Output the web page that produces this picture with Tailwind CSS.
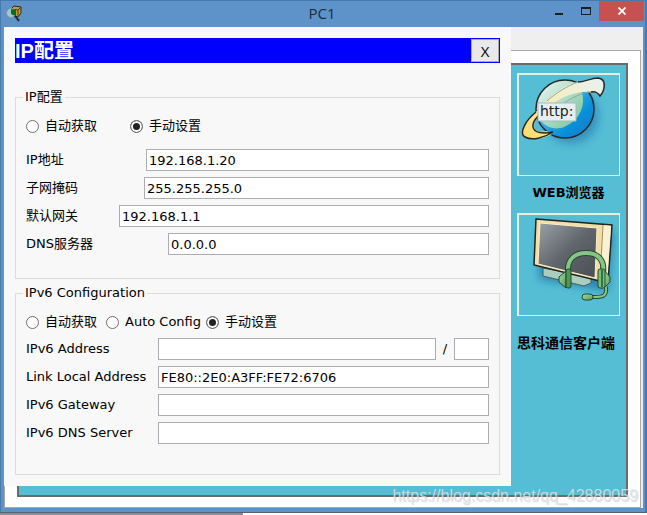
<!DOCTYPE html>
<html lang="zh-CN">
<head>
    <meta charset="UTF-8">
    <title>PC1</title>
    <script src="https://cdn.jsdelivr.net/npm/@tailwindcss/browser@4"></script>
</head>
<body class="relative flex flex-col h-screen bg-white overflow-hidden text-black text-[13px] leading-5 font-['DejaVu_Sans','Noto_Sans_CJK_SC',sans-serif]">
    <!-- window -->
    <div class="flex-1 flex flex-col bg-[#5d93c8] border-t border-l border-r-2 border-[#4779ac] border-b border-b-[#55606a] pl-[3px] pr-[2px] pb-1">
        <header class="flex h-[26px] items-start -mr-px">
            <svg class="mt-1 ml-[2px]" width="18" height="18" viewBox="0 0 18 18">
                <path d="M5 4l3-3 7 1v6l-3 4-6-2z" fill="#c79a3c" stroke="#332a12"/>
                <path d="M5 4l7 1 3-3M12 5v6" fill="none" stroke="#4a3a16"/>
                <circle cx="5" cy="8" r="4.500" fill="#a9c4cf" stroke="#8099a6"/>
                <path d="M5 4l5 1v6l-3-1-2-1z" fill="#08701a"/>
                <path d="M9 11l4 5" stroke="#1c2430" stroke-width="2"/>
            </svg>
            <h1 class="flex-1 text-center pt-[2px] pl-[74px] text-[15px] text-[#1c2b3c] font-['Open_Sans',sans-serif]">PC1</h1>
            <button aria-label="Minimize" class="w-[26px] h-5 flex items-center justify-center">
                <svg width="8" height="10" viewBox="0 0 8 10"><path d="M0 7h8v2H0z" fill="#1d1d1d"/></svg>
            </button>
            <button aria-label="Maximize" class="w-[27px] h-5 flex items-center justify-center">
                <svg width="10" height="8" viewBox="0 0 10 8"><path d="M0 0h10v8H0zM1 2v5h8V2z" fill="#1d1d1d" fill-rule="evenodd"/></svg>
            </button>
            <button aria-label="Close" class="w-[45px] h-5 bg-[#c75050] flex items-center justify-center">
                <svg width="8" height="8" viewBox="0 0 8 8"><path d="M.5.5l7 7M7.500.5l-7 7" stroke="#fff" stroke-width="1.800"/></svg>
            </button>
        </header>

        <main class="relative flex-1 flex flex-col bg-[#efefef] pt-[23px] pr-[2px]">
            <!-- desktop tab -->
            <div class="flex-1 flex bg-white border border-[#a9a9a9] px-3 pt-3 pb-[10px]">
                <div class="flex-1 flex justify-end bg-[#55bed5] border-2 border-[#6b6b6b] pt-2 pr-[6px]">
                    <div class="w-[103px] flex flex-col font-bold">
                        <a href="#" class="flex flex-col items-center">
                            <span class="size-[103px] border border-l-2 border-t-2 border-[#e9eedc]">
                                <svg width="100" height="100" viewBox="0 0 100 100">
                                    <defs>
                                        <linearGradient id="sea" x1="0" y1="0" x2="1" y2="1">
                                            <stop offset="0.3" stop-color="#55b9e4"/>
                                            <stop offset="0.7" stop-color="#0790da"/>
                                            <stop offset="1" stop-color="#2872bd"/>
                                        </linearGradient>
                                        <linearGradient id="land" x1="0" y1="0" x2="1" y2="1">
                                            <stop offset="0" stop-color="#f0f8f8"/>
                                            <stop offset="0.6" stop-color="#a1d7bd"/>
                                            <stop offset="1" stop-color="#6fc78f"/>
                                        </linearGradient>
                                        <linearGradient id="ring" x1="0" y1="1" x2="1" y2="0">
                                            <stop offset="0" stop-color="#ffdb60"/>
                                            <stop offset="0.5" stop-color="#f7edbd"/>
                                            <stop offset="1" stop-color="#e7f2f4"/>
                                        </linearGradient>
                                        <filter id="soft" x="-30%" y="-30%" width="160%" height="160%">
                                            <feGaussianBlur stdDeviation="4"/>
                                        </filter>
                                    </defs>
                                    <circle cx="52" cy="41" r="28" fill="#1f6fae" opacity=".55" filter="url(#soft)"/>
                                    <circle cx="46" cy="34" r="29" fill="url(#sea)"/>
                                    <path d="M17 34C17 17 30 5 46 5c10 0 17 7 18 18 1 13-7 24-19 29-8 3-15 1-20-3-5-5-8-9-8-15z" fill="url(#land)"/>
                                    <circle cx="46" cy="34" r="29" fill="none" stroke="#272727" stroke-width="1.500"/>
                                    <path d="M18 36C8 43-1 58 6 62c7 4 18 2 27-3l-5-3c-6 1-12 1-13-4-1-6 7-13 14-20 16-12 30-16 45-15l7 4c5-5 6-17-2-18-7-1-12 3-20 4-14 2-27 13-41 29z" fill="url(#ring)"/>
                                    <path d="M17 37C8 44-1 58 6 62c7 4 19 1 28-5-10 2-19 1-20-5-1-5 4-10 9-15M59 7c7 0 12-4 20-4 9 1 7 12 2 18-2-3-4-5-9-4" fill="none" stroke="#272727" stroke-width="1.500"/>
                                    <path d="M28 26c11-10 21-15 31-19M45 28c9-6 18-10 27-11" fill="none" stroke="#91a4a0"/>
                                    <path d="M19 28h38v18H19z" fill="#e6eef5" stroke="#a9b6bd"/>
                                    <text x="21" y="41" font-size="14" font-weight="400" font-family="DejaVu Sans" fill="#222">http:</text>
                                </svg>
                            </span>
                            <span class="mt-[7px]">WEB浏览器</span>
                        </a>
                        <a href="#" class="mt-[10px] flex flex-col items-start">
                            <span class="size-[103px] border border-l-2 border-t-2 border-[#e9eedc]">
                                <svg width="100" height="100" viewBox="0 0 100 100">
                                    <defs>
                                        <linearGradient id="screen" x1="0" y1="0" x2="1" y2="1">
                                            <stop offset="0" stop-color="#9aa1a7"/>
                                            <stop offset="0.5" stop-color="#60666c"/>
                                            <stop offset="1" stop-color="#484e54"/>
                                        </linearGradient>
                                        <linearGradient id="green" x1="0" y1="0" x2="1" y2="1">
                                            <stop offset="0" stop-color="#a9dba6"/>
                                            <stop offset="1" stop-color="#559b5a"/>
                                        </linearGradient>
                                    </defs>
                                    <path d="M22 10l73 6-6 60-69-12z" fill="#17649c" opacity=".65" filter="url(#soft)"/>
                                    <path d="M24 53l48 9v6l-7 3-41-10z" fill="#a9cdbf" stroke="#47605c"/>
                                    <path d="M17 4l76 6-4 58-74-18z" fill="#f3dfa5" stroke="#222" stroke-width="1.500"/>
                                    <path d="M84 10l8 1-4 55-8-2z" fill="#f9f1d2"/>
                                    <path d="M21 8l57 5-2 50-57-14z" fill="url(#screen)" stroke="#f9efca"/>
                                    <path d="M84 10l-3 54" stroke="#a28f60"/>
                                    <path d="M49 57c-1-13 7-19 18-19 12 0 19 7 17 20" fill="none" stroke="#28482c" stroke-width="6"/>
                                    <path d="M49 57c-1-13 7-19 18-19 12 0 19 7 17 20" fill="none" stroke="#85c587" stroke-width="4"/>
                                    <path d="M87 72c1 9-3 10-11 10h-6" fill="none" stroke="#28482c" stroke-width="4"/>
                                    <path d="M87 72c1 9-3 10-11 10h-6" fill="none" stroke="#85c587" stroke-width="2"/>
                                    <path d="M47 56l-7 6v5l7 6z" fill="url(#green)" stroke="#28482c"/>
                                    <rect x="47" y="54" width="5" height="19" rx="2" fill="#4b9856" stroke="#28482c"/>
                                    <path d="M85 55l6 7v5l-6 6z" fill="url(#green)" stroke="#28482c"/>
                                    <rect x="79" y="54" width="7" height="19" rx="2" fill="#78bd7c" stroke="#28482c"/>
                                    <path d="M83 55v17" stroke="#247b3c" stroke-width="2"/>
                                    <rect x="63" y="79" width="11" height="6" rx="3" fill="url(#green)" stroke="#28482c"/>
                                </svg>
                            </span>
                            <span class="mt-[17px] whitespace-nowrap text-[14px]">思科通信客户端</span>
                        </a>
                    </div>
                </div>
            </div>

            <!-- IP configuration dialog -->
            <form class="absolute top-0 left-0 right-[132px] bg-[#f8f8f8] px-[11px] pt-[11px] pb-[11px]">
                <div class="flex items-center justify-between h-[25px] bg-[#0000ff] pr-px">
                    <h2 class="text-[20px] font-bold text-white font-['Liberation_Sans','Noto_Sans_CJK_SC',sans-serif]">IP配置</h2>
                    <button type="button" class="w-7 h-[23px] bg-[#e9e9e9] border border-[#a9abb8] font-['Open_Sans',sans-serif] text-[15px] leading-5">X</button>
                </div>

                <fieldset class="mt-6 border border-[#dcdcdc] px-[10px] pt-[9px] pb-[23px]">
                    <legend class="-ml-[3px] px-[2px]">IP配置</legend>
                    <div class="flex items-center h-5">
                        <label class="flex items-center gap-[6px] w-[104px]"><input type="radio" name="ipv4" class="appearance-none size-[13px] rounded-full border border-[#707070] bg-white checked:bg-[#222] checked:shadow-[inset_0_0_0_2px_#fff]">自动获取</label>
                        <label class="flex items-center gap-[6px]"><input type="radio" name="ipv4" checked class="appearance-none size-[13px] rounded-full border border-[#707070] bg-white checked:bg-[#222] checked:shadow-[inset_0_0_0_2px_#fff]">手动设置</label>
                    </div>
                    <div class="mt-[13px] flex flex-col gap-[6px]">
                        <div class="flex items-center">
                            <label for="ip" class="w-[120px]">IP地址</label>
                            <input id="ip" type="text" value="192.168.1.20" class="flex-1 min-w-0 h-[22px] px-[2px] bg-white border border-[#abadb3]">
                        </div>
                        <div class="flex items-center">
                            <label for="mask" class="w-[118px]">子网掩码</label>
                            <input id="mask" type="text" value="255.255.255.0" class="flex-1 min-w-0 h-[22px] px-[2px] bg-white border border-[#abadb3]">
                        </div>
                        <div class="flex items-center">
                            <label for="gateway" class="w-[93px]">默认网关</label>
                            <input id="gateway" type="text" value="192.168.1.1" class="flex-1 min-w-0 h-[22px] px-[2px] bg-white border border-[#abadb3]">
                        </div>
                        <div class="flex items-center">
                            <label for="dns" class="w-[142px]">DNS服务器</label>
                            <input id="dns" type="text" value="0.0.0.0" class="flex-1 min-w-0 h-[22px] px-[2px] bg-white border border-[#abadb3]">
                        </div>
                    </div>
                </fieldset>

                <fieldset class="mt-1 border border-[#dcdcdc] px-[10px] pt-[9px] pb-[30px]">
                    <legend class="-ml-[3px] px-[2px]">IPv6 Configuration</legend>
                    <div class="flex items-center h-5">
                        <label class="flex items-center gap-[6px] w-20"><input type="radio" name="ipv6" class="appearance-none size-[13px] rounded-full border border-[#707070] bg-white checked:bg-[#222] checked:shadow-[inset_0_0_0_2px_#fff]">自动获取</label>
                        <label class="flex items-center gap-[6px] w-[100px] whitespace-nowrap"><input type="radio" name="ipv6" class="shrink-0 appearance-none size-[13px] rounded-full border border-[#707070] bg-white checked:bg-[#222] checked:shadow-[inset_0_0_0_2px_#fff]">Auto Config</label>
                        <label class="flex items-center gap-[6px]"><input type="radio" name="ipv6" checked class="appearance-none size-[13px] rounded-full border border-[#707070] bg-white checked:bg-[#222] checked:shadow-[inset_0_0_0_2px_#fff]">手动设置</label>
                    </div>
                    <div class="mt-[6px] flex flex-col gap-[6px]">
                        <div class="flex items-center">
                            <label for="ip6" class="w-[132px]">IPv6 Address</label>
                            <input id="ip6" type="text" class="flex-1 min-w-0 h-[22px] px-[2px] bg-white border border-[#abadb3]">
                            <label for="prefix" class="w-[18px] text-center">/</label>
                            <input id="prefix" type="text" class="w-[35px] h-[22px] px-[2px] bg-white border border-[#abadb3]">
                        </div>
                        <div class="flex items-center">
                            <label for="link" class="w-[132px]">Link Local Address</label>
                            <input id="link" type="text" value="FE80::2E0:A3FF:FE72:6706" class="flex-1 min-w-0 h-[22px] px-[2px] bg-white border border-[#abadb3]">
                        </div>
                        <div class="flex items-center">
                            <label for="gateway6" class="w-[132px]">IPv6 Gateway</label>
                            <input id="gateway6" type="text" class="flex-1 min-w-0 h-[22px] px-[2px] bg-white border border-[#abadb3]">
                        </div>
                        <div class="flex items-center">
                            <label for="dns6" class="w-[132px]">IPv6 DNS Server</label>
                            <input id="dns6" type="text" class="flex-1 min-w-0 h-[22px] px-[2px] bg-white border border-[#abadb3]">
                        </div>
                    </div>
                </fieldset>
            </form>
        </main>
    </div>
    <div class="h-[2px] w-[243px] bg-[#8b8b9b]"></div>

    <span class="absolute right-[9px] bottom-[9px] text-base leading-5 text-[#dfe7ea]/80 [text-shadow:1px_1px_1px_#8c969a60] font-['Liberation_Sans',sans-serif]">https://blog.csdn.net/qq_42880059</span>
</body>
</html>
